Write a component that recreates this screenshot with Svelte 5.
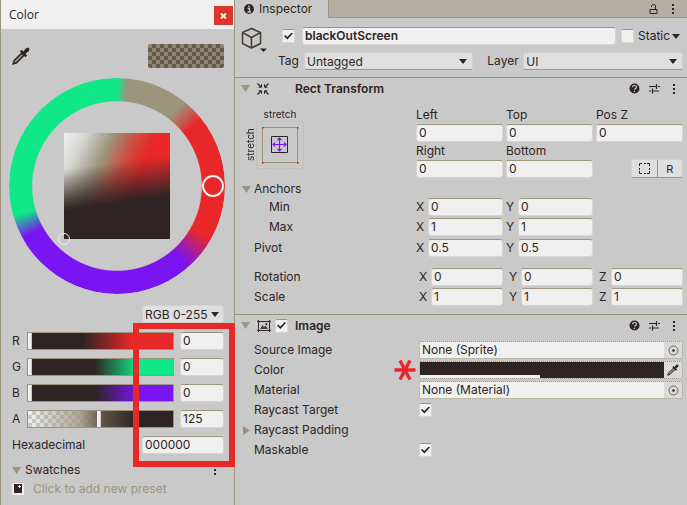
<script>
  const channels = [
    { name: 'R', value: 0, kind: 'red' },
    { name: 'G', value: 0, kind: 'green' },
    { name: 'B', value: 0, kind: 'blue' },
    { name: 'A', value: 125, kind: 'alpha' }
  ];
  const offsets = [
    ['Left', '0'],
    ['Top', '0'],
    ['Pos Z', '0'],
    ['Right', '0'],
    ['Bottom', '0']
  ];
  const vectors = [
    { label: 'Min', cls: 'indent', axes: [['X', '0'], ['Y', '0']] },
    { label: 'Max', cls: 'indent', axes: [['X', '1'], ['Y', '1']] },
    { label: 'Pivot', cls: 'pivot', axes: [['X', '0.5'], ['Y', '0.5']] },
    { label: 'Rotation', cls: 'wide rotation', axes: [['X', '0'], ['Y', '0'], ['Z', '0']] },
    { label: 'Scale', cls: 'wide', axes: [['X', '1'], ['Y', '1'], ['Z', '1']] }
  ];
</script>

{#snippet caret()}
  <svg class="caret" width="8" height="5" viewBox="0 0 8 5" aria-hidden="true"><path d="M0 0h8L4 5z" fill="#2e2424" /></svg>
{/snippet}

{#snippet fold(open)}
  <svg class="fold" width="9" height="9" viewBox="0 0 9 9" aria-hidden="true">
    <path d={open ? 'M0 1h9L4.5 8z' : 'M1 0v9l7-4.5z'} fill="#9c947c" />
  </svg>
{/snippet}

{#snippet kebab()}
  <svg width="4" height="12" viewBox="0 0 4 12" aria-hidden="true"><path d="M1 1h2v2H1zM1 5h2v2H1zM1 9h2v2H1z" fill="#2e2424" /></svg>
{/snippet}

{#snippet dropper(size)}
  <svg width={size} height={size} viewBox="0 0 16 16" aria-hidden="true">
    <path d="M1 15l1-3 6.500-6.500 2 2L4 14z" fill="#9c947c" stroke="#2e2424" stroke-width="1.300" />
    <path d="M7 4l1.500-1.500L10 4l2.500-3 2-.5 1 1-.5 2L12 6l1.500 1.500L12 9z" fill="#2e2424" />
  </svg>
{/snippet}

{#snippet tick(label, on)}
  <input class="tick" type="checkbox" aria-label={label} checked={on} />
{/snippet}

{#snippet headTools()}
  <span class="tools">
    <button aria-label="Help">
      <svg width="11" height="11" viewBox="0 0 11 11"><circle cx="5.500" cy="5.500" r="5" fill="#2e2424" /><path d="M3.500 4.300c0-2.400 4-2.400 4 0 0 1.300-2 1.300-2 2.500M5.500 7.800v1.200" fill="none" stroke="#c9c9c9" stroke-width="1.200" /></svg>
    </button>
    <button aria-label="Presets">
      <svg width="11" height="11" viewBox="0 0 11 11"><path d="M0 3.500h7M9 3.500h2M7.500 1v5M0 8h2M4 8h6M3.500 5.500v5" fill="none" stroke="#2e2424" stroke-width="1.200" /></svg>
    </button>
    <button aria-label="Component menu">{@render kebab()}</button>
  </span>
{/snippet}

{#snippet target()}
  <svg width="11" height="11" viewBox="0 0 11 11"><circle cx="5.500" cy="5.500" r="4.500" fill="none" stroke="#6a6253" /><circle cx="5.500" cy="5.500" r="1.300" fill="#2e2424" /></svg>
{/snippet}

<div class="editor">
  <section class="picker" aria-label="Color">
    <header class="title">
      <h1>Color</h1>
      <button class="close" aria-label="Close">
        <svg width="7" height="6" viewBox="0 0 7 6"><path d="M1 .5l5 5M6 .5l-5 5" stroke="#f0f0f0" stroke-width="1.800" /></svg>
      </button>
    </header>
    <div class="content">
      <div class="top">
        <button aria-label="Pick from screen">{@render dropper(18)}</button>
        <span class="preview"></span>
      </div>
      <div class="wheel">
        <div class="hue"></div>
        <div class="shade"></div>
        <span class="knob"></span>
        <span class="dot"></span>
      </div>
      <label class="select mode">
        <select aria-label="Color mode"><option>RGB 0-255</option></select>
        {@render caret()}
      </label>
      <div class="channels">
        {#each channels as c}
          <div class="channel">
            <label for={'ch' + c.name}>{c.name}</label>
            <input class="slider {c.kind}" type="range" min="0" max="255" value={c.value} aria-label={c.name + ' slider'} />
            <input class="field" id={'ch' + c.name} value={c.value} />
          </div>
        {/each}
        <div class="hex">
          <label for="hex">Hexadecimal</label>
          <input class="field" id="hex" value="000000" />
        </div>
        <span class="mark"></span>
      </div>
      <div class="swatches">
        {@render fold(true)}<span>Swatches</span>
        <button aria-label="Swatch menu">{@render kebab()}</button>
      </div>
      <button class="preset">
        <svg width="12" height="12" viewBox="0 0 12 12"><path d="M0 0h12v12H0z" fill="#f0f0f0" /><path d="M2 1h8v9H2z" fill="#2e2424" /><path d="M7.500 2v3M6 3.500h3" stroke="#f0f0f0" /></svg>
        <span>Click to add new preset</span>
      </button>
    </div>
  </section>

  <main class="inspector">
    <nav>
      <a class="tab" href="#inspector">
        <svg width="10" height="10" viewBox="0 0 10 10"><circle cx="5" cy="5" r="4.900" fill="#2e2424" /><path d="M5 1.500v1.700M3.600 4.500H5.500V8M3.500 8h3.500" fill="none" stroke="#c9c9c9" stroke-width="1.300" /></svg>
        <span>Inspector</span>
      </a>
      <div class="strip">
        <button aria-label="Lock"><svg width="9" height="10" viewBox="0 0 9 10"><path d="M1 5.500h7v4H1zM2.500 3V2c0-2 4-2 4 0v3.500" fill="none" stroke="#2e2424" /></svg></button>
        <button aria-label="Inspector menu">{@render kebab()}</button>
      </div>
    </nav>

    <section class="object">
      <button class="cube" aria-label="Object icon">
        <svg width="27" height="26" viewBox="0 0 27 26">
          <path d="M10.500 1.500l9 4v11l-9 4.500-9-4.500v-11zM1.500 5.500l9 5 9-5M10.500 10.500V21" fill="none" stroke="#4a4037" stroke-width="1.600" stroke-linejoin="round" />
          <path d="M19 21.500h7l-3.500 3.500z" fill="#2e2424" />
        </svg>
      </button>
      <div class="lines">
        <div class="line name">
          {@render tick('Active', true)}
          <input class="field strong" aria-label="Name" value="blackOutScreen" />
          <label class="static"><input class="tick" type="checkbox" /><span>Static</span>{@render caret()}</label>
        </div>
        <div class="line tags">
          <label for="tag">Tag</label>
          <span class="select tag"><select id="tag"><option>Untagged</option></select>{@render caret()}</span>
          <label class="layer" for="layer">Layer</label>
          <span class="select"><select id="layer"><option>UI</option></select>{@render caret()}</span>
        </div>
      </div>
    </section>

    <section class="component">
      <header>
        {@render fold(true)}
        <svg class="kind" width="12" height="12" viewBox="0 0 12 12"><path d="M.5 .5L4 4M.5 11.500L4 8M11.500 .5L8 4M11.500 11.500L8 8" stroke="#2e2424" stroke-width="1.200" /><path d="M1.500 4.200h3v-3M10.500 4.200h-3v-3M1.500 7.800h3v3M10.500 7.800h-3v3" stroke="#2e2424" fill="none" /></svg>
        <h2 class="rect">Rect Transform</h2>
        {@render headTools()}
      </header>
      <div class="rect-top">
        <div class="anchor">
          <span class="across">stretch</span>
          <span class="down">stretch</span>
          <button aria-label="Anchor presets">
            <svg width="48" height="48" viewBox="0 0 48 48">
              <path d="M.5 .5h47v47H.5z" fill="none" stroke="#b4af9f" stroke-dasharray="1 2" />
              <path d="M6.500 6.500h35v35h-35z" fill="none" stroke="#9c947c" />
              <path d="M15.500 15.500h16v16h-16z" fill="#c9c9c9" stroke="#2e2424" />
              <path d="M17 23.500h13M23.500 17v13M19 21.500l-2 2 2 2M28 21.500l2 2-2 2M21.500 19l2-2 2 2M21.500 28l2 2 2-2" fill="none" stroke="#7a14f0" stroke-width="1.200" />
              <path d="M6 6h1.500v1.500H6zM41 6h1.500v1.500H41zM6 41h1.500v1.500H6zM41 41h1.500v1.500H41z" fill="#b01c1c" />
            </svg>
          </button>
        </div>
        <div class="offsets">
          {#each offsets as [name, value]}
            <label>{name}<input class="field" {value} /></label>
          {/each}
          <div class="modes">
            <button aria-label="Blueprint mode"><svg width="11" height="11" viewBox="0 0 11 11"><path d="M.5 3V.5H3M5 .5h2M8 .5h2.500V3M.5 5v2M10.500 5v2M.5 8v2.500H3M5 10.500h2M8 10.500h2.500V8" fill="none" stroke="#2e2424" /></svg></button>
            <button>R</button>
          </div>
        </div>
      </div>
      <div class="row anchors">{@render fold(true)}<span>Anchors</span></div>
      {#each vectors as v}
        <div class="row {v.cls}">
          <span class="label">{v.label}</span>
          <div class="axes">
            {#each v.axes as [axis, value]}
              <label><span>{axis}</span><input class="field" {value} /></label>
            {/each}
          </div>
        </div>
      {/each}
    </section>

    <section class="component image">
      <header>
        {@render fold(true)}
        <svg class="kind" width="14" height="12" viewBox="0 0 14 12"><path d="M1.500 1.500h11v9h-11zM0 1.500h1.500V0M14 1.500h-1.500V0M0 10.500h1.500V12M14 10.500h-1.500V12" fill="none" stroke="#2e2424" /><path d="M3 9l2.500-4L7 7l1.500-1.500L11 9z" fill="#4a4037" /><circle cx="9.500" cy="4" r="1" fill="#2e2424" /></svg>
        {@render tick('Image enabled', true)}
        <h2>Image</h2>
        {@render headTools()}
      </header>
      <div class="row">
        <label class="label" for="sprite">Source Image</label>
        <span class="object-field"><input id="sprite" value="None (Sprite)" /><button aria-label="Select sprite">{@render target()}</button></span>
      </div>
      <div class="row">
        <span class="label">Color</span>
        <svg class="star" width="22" height="22" viewBox="0 0 22 22" aria-hidden="true"><path d="M.5 11h21M6 1.500l10 19M16 1.500L6 20.500" stroke="#e82828" stroke-width="3.400" /></svg>
        <span class="object-field color"><button class="bar" aria-label="Color"><i></i></button><button aria-label="Pick color">{@render dropper(12)}</button></span>
      </div>
      <div class="row">
        <label class="label" for="material">Material</label>
        <span class="object-field"><input id="material" value="None (Material)" /><button aria-label="Select material">{@render target()}</button></span>
      </div>
      <div class="row"><span class="label">Raycast Target</span>{@render tick('Raycast Target', true)}</div>
      <div class="row">{@render fold(false)}<span class="label">Raycast Padding</span></div>
      <div class="row"><span class="label">Maskable</span>{@render tick('Maskable', true)}</div>
    </section>
  </main>
</div>

<style>
  :global(body) { margin: 0; background: #c9c9c9; }
  .editor, .editor * { box-sizing: border-box; }
  .editor {
    display: flex;
    min-height: 100vh;
    background: #c9c9c9;
    color: #2e2424;
    font: 12px/18px Inter, "Liberation Sans", sans-serif;
  }
  button, input, select { font: inherit; color: inherit; margin: 0; padding: 0; border: 0; background: none; border-radius: 0; }
  button { display: flex; align-items: center; justify-content: center; }
  svg { display: block; flex: none; }
  h1, h2 { margin: 0; font-size: 12px; line-height: 18px; }
  a { color: inherit; text-decoration: none; }

  .field {
    display: block;
    width: 100%;
    min-width: 0;
    height: 18px;
    padding: 0 2px;
    background: #f0f0f0;
    border: 1px solid #d6d5d0;
    border-top-color: #9c947c;
    border-radius: 3px;
  }
  .strong { font-weight: 600; }
  .select { position: relative; display: block; flex: 1; min-width: 0; }
  .select select {
    display: block;
    appearance: none;
    width: 100%;
    height: 18px;
    padding: 0 2px;
    background: #dfdfdf;
    border: 1px solid #d2d1cc;
    border-bottom-color: #9c947c;
    border-radius: 3px;
  }
  .select .caret { position: absolute; right: 6px; top: 7px; pointer-events: none; }
  .tick {
    appearance: none;
    display: grid;
    place-items: center;
    flex: none;
    width: 13px;
    height: 14px;
    background: #f0f0f0;
    border: 1px solid #d6d5d0;
    border-top-color: #9c947c;
    border-radius: 2px;
  }
  .tick:checked::after {
    content: "";
    width: 9px;
    height: 7px;
    background: #2e2424;
    clip-path: polygon(0 50%, 14% 36%, 36% 64%, 86% 0, 100% 12%, 38% 100%);
  }

  .picker { flex: 0 0 235px; border: 1px solid #9c947c; border-width: 0 1px; }
  .title { display: flex; align-items: center; justify-content: space-between; height: 29px; padding: 0 1px 0 8px; background: #f0f0f0; }
  .title h1 { font: 12px/18px "Open Sans", "Noto Sans", sans-serif; }
  .close { width: 19px; height: 19px; margin-top: 2px; background: #d9382f; }
  .content { padding: 15px 10px 0 11px; }
  .top { display: flex; justify-content: space-between; height: 24px; }
  .preview {
    width: 76px;
    border-radius: 2px;
    background: repeating-conic-gradient(#665d50 0 25%, #8d856f 0 50%) 0 0 / 8px 8px;
  }
  .wheel { position: relative; aspect-ratio: 1; margin: 10px -1px 0 -3px; }
  .hue {
    height: 100%;
    border-radius: 50%;
    background: conic-gradient(#10e888, #9c947c 6deg 38deg, #e82828 52deg 119deg, #7a14f0 139deg 241deg, #10e888 254deg 360deg);
    mask: radial-gradient(closest-side, transparent 78%, #000 79%);
  }
  .shade {
    position: absolute;
    inset: 25.500%;
    background:
      linear-gradient(172deg, transparent 30%, #2e2424 64%),
      linear-gradient(115deg, #f0f0f0, #d6d6d2 14%, #9c947c 32%, #d04a3e 48%, #e82828 60%);
  }
  .knob, .dot { position: absolute; border: 2px solid #f0f0f0; border-radius: 50%; transform: translate(-50%, -50%); }
  .knob { width: 22px; height: 22px; left: 94.500%; top: 50%; }
  .dot { width: 12px; height: 12px; border-width: 1px; left: 25.500%; top: 74.500%; }
  .mode { width: 82px; margin: 11px 0 0 auto; }
  .mode .caret { right: 5px; }
  .mode select { border-color: #d2d1cc; }
  .channels { position: relative; display: grid; gap: 8px; margin-top: 9px; }
  .channel { display: grid; grid-template-columns: 15px 1fr 44px; align-items: center; }
  .hex { display: grid; grid-template-columns: 1fr 82px; }
  .slider {
    appearance: none;
    width: auto;
    min-width: 0;
    height: 18px;
    margin-right: 6px;
    border: 1px solid #9c947c;
  }
  .slider::-webkit-slider-thumb { appearance: none; width: 4px; height: 16px; background: #f0f0f0; border: 0; border-right: 1px solid #c9c9c9; }
  .red { background: linear-gradient(90deg, #2e2424 38%, #e82828 72%); }
  .green { background: linear-gradient(90deg, #2e2424 46%, #10e888 76%); }
  .blue { background: linear-gradient(90deg, #2e2424 46%, #7a14f0 76%); }
  .alpha {
    background:
      linear-gradient(90deg, transparent, #9c947ccc 36%, #5b5245 52%, #2e2424 74%),
      repeating-conic-gradient(#c9c9c9 0 25%, #f0f0f0 0 50%) 0 0 / 8px 8px;
  }
  .mark { position: absolute; inset: -9px -11px -13px 121px; border: 6px solid #e82828; pointer-events: none; }
  .swatches { display: flex; align-items: center; gap: 4px; margin-top: 7px; }
  .swatches button { margin-left: auto; margin-right: 7px; }
  .preset { gap: 9px; line-height: 20px; color: #9c947c; }

  .inspector { flex: 1; min-width: 0; }
  nav { display: flex; height: 18px; }
  .tab { display: flex; align-items: center; gap: 5px; width: 93px; padding-left: 9px; }
  .strip { display: flex; flex: 1; align-items: center; justify-content: flex-end; gap: 13px; padding-right: 12px; background: #b3afa3; border: 1px solid #9c947c; border-width: 0 0 1px 1px; }
  .object { display: flex; padding: 9px 4px 7px 6px; }
  .cube { align-items: flex-start; }
  .lines { flex: 1; min-width: 0; display: grid; gap: 7px; }
  .line { display: flex; align-items: center; }
  .name { padding-left: 14px; gap: 7px; }
  .static { display: flex; flex: none; align-items: center; width: 62px; margin-left: -2px; }
  .static span { margin: 0 2px 0 4px; }
  .tags { padding-left: 10px; }
  .tags label { flex: 0 0 26px; }
  .tags .layer { flex-basis: 36px; margin-left: 14px; }
  .tags .tag { flex-grow: 1.06; }

  .component { border-top: 1px solid #9c947c; }
  .component header { display: flex; align-items: center; height: 21px; padding: 0 11px 0 6px; }
  .component header .kind { margin-left: 7px; }
  .component header .tick { margin-left: 4px; }
  h2 { font-weight: 600; margin-left: 7px; }
  h2.rect { margin-left: 26px; }
  .tools { display: flex; align-items: center; gap: 9px; margin-left: auto; }
  .tools button:last-child { margin-left: 3px; }
  .rect-top { display: flex; padding: 7px 4px 0 0; }
  .anchor { flex: 0 0 181px; display: grid; grid-template: 15px 48px / 12px 48px; padding-left: 9px; font-size: 10px; align-content: start; }
  .across { grid-column: 2; text-align: center; line-height: 16px; }
  .down { grid-column: 1; writing-mode: vertical-rl; transform: rotate(180deg); text-align: center; line-height: 12px; }
  .offsets { flex: 1; min-width: 0; display: grid; grid-template-columns: repeat(3, 1fr); column-gap: 3px; }
  .offsets label { line-height: 18px; }
  .modes { display: flex; align-self: end; justify-self: end; width: 52px; height: 19px; background: #dfdfdf; border: 1px solid #d2d1cc; border-bottom-color: #9c947c; border-radius: 3px; }
  .modes button { flex: 1; font-size: 11px; }
  .modes button + button { border-left: 1px solid #9c947c; }
  .row { display: flex; align-items: center; position: relative; height: 20px; padding: 0 4px 0 19px; }
  .row .fold { position: absolute; left: 7px; }
  .label { flex: 0 0 162px; }
  .anchors { height: 16px; margin-top: 3px; }
  .indent { padding-left: 34px; }
  .indent .label { flex-basis: 147px; }
  .pivot { margin-top: 1px; }
  .rotation { margin-top: 9px; }
  .component > .wide:last-child { margin-bottom: 7px; }
  .axes { flex: 1; min-width: 0; display: grid; grid-template-columns: repeat(3, 1fr); column-gap: 3px; }
  .axes label { display: flex; align-items: center; }
  .axes span { flex: 0 0 12px; }
  .wide .axes span { flex-basis: 15px; padding-left: 3px; }
  .image header { margin-bottom: 4px; }
  .image .label { flex-basis: 165px; }
  .object-field { display: flex; flex: 1; min-width: 0; height: 18px; border: 1px dotted #9c947c; border-radius: 2px; background: #dadada; }
  .object-field input { flex: 1; min-width: 0; padding: 0 2px; background: #f0f0f0; }
  .object-field button { flex: 0 0 18px; }
  .object-field .bar { flex: 1; align-items: flex-end; justify-content: flex-start; background: #2e2424; }
  .bar i { width: 49%; height: 3px; background: #f0f0f0; }
  .star { position: absolute; left: 159px; }
</style>
